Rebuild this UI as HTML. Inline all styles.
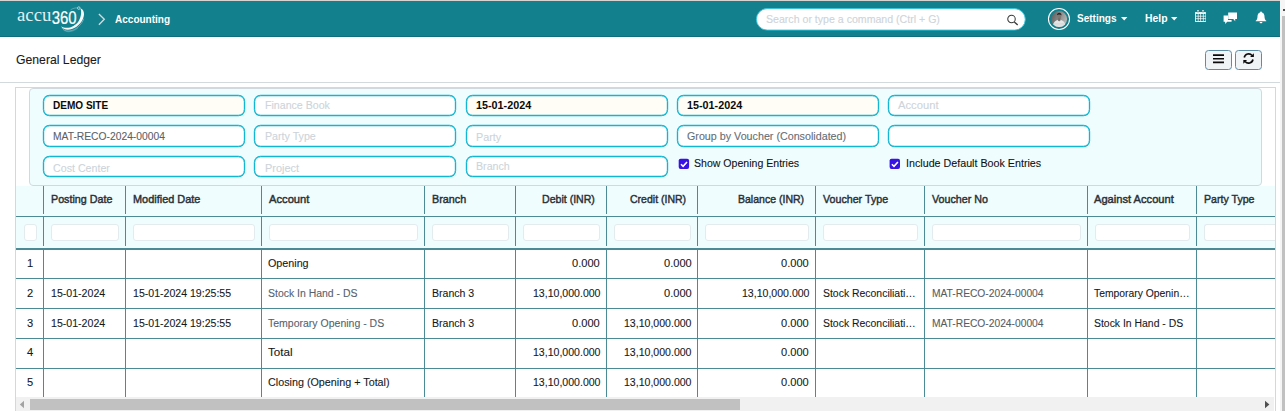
<!DOCTYPE html>
<html><head><meta charset="utf-8"><title>General Ledger</title>
<style>
html,body{margin:0;padding:0;}
body{width:1285px;height:411px;overflow:hidden;background:#fff;position:relative;font-family:"Liberation Sans",sans-serif;}
.a{position:absolute;box-sizing:border-box;}
.t{position:absolute;white-space:pre;font-family:"Liberation Sans",sans-serif;display:inline-block;line-height:14px;transform-origin:0 0;}
.inp{position:absolute;box-sizing:border-box;height:21px;width:202px;border:1px solid #12b6d0;border-radius:6.5px;background:#fff;box-shadow:0 0 0 0.18px #12b6d0, inset 0 0 0 0.18px #12b6d0;}
.inp.v{background:#fffdf5;}
.fi{position:absolute;box-sizing:border-box;top:224px;height:17px;border:1px solid #e4ebee;border-radius:3px;background:#fff;}
.vl{position:absolute;width:1px;background:#4c8b96;}
.hl{position:absolute;height:1px;background:#4c8b96;left:16px;width:1259px;}
.btn{position:absolute;box-sizing:border-box;top:50px;height:20px;width:27px;border:1px solid #5d8ca6;border-radius:3.5px;background:#f0f4f7;}
.cb{position:absolute;box-sizing:border-box;width:10.5px;height:10.5px;border-radius:2px;background:#3a12e6;}
svg{position:absolute;overflow:visible;}

</style></head>
<body>
<!-- top strip -->
<div class="a" style="left:0;top:0;width:1285px;height:1px;background:#d6d3d0"></div>
<!-- navbar -->
<div class="a" style="left:0;top:1px;width:1280px;height:36px;background:#13808e;border-bottom:1px solid #0f6e7b"></div>
<!-- vertical page scrollbar (cropped) -->
<div class="a" style="left:1280px;top:0;width:5px;height:411px;background:#f5f5f5"></div>
<div class="a" style="left:1282px;top:16px;width:3px;height:395px;background:#c1c1c1"></div>
<div class="a" style="left:1283px;top:9px;width:2px;height:2px;background:#505050"></div>

<!-- logo -->
<svg style="left:0;top:0" width="100" height="38" viewBox="0 0 100 38">
  <text x="17" y="21.3" font-family="Liberation Serif, serif" font-size="17.9" fill="#fff" fill-opacity="0.9" textLength="34.4" lengthAdjust="spacingAndGlyphs">accu</text>
  <g transform="translate(51.7 23.8) scale(0.795 1)"><text x="0" y="0" font-family="Liberation Sans, sans-serif" font-size="18.8" fill="#fff" stroke="#fff" stroke-width="0.22">360</text></g>
  <path d="M61 26.2 C63.5 30.4 70 31 76.5 26.7 C82.2 22.8 85.6 15.6 83.3 10.8 C82.7 9.6 81.7 8.8 80.4 8.6 C81.7 11.5 81.4 16.5 78.7 20.9 C75.4 26.2 67 30.2 61 26.2 Z" fill="#fff" fill-opacity="0.96"/>
  <path d="M61.8 27.9 C65 32 72 32.4 78.5 26.6 C81.5 23.8 83.2 20.8 83.7 18.6" fill="none" stroke="#fff" stroke-opacity="0.55" stroke-width="0.6"/>
  <path d="M63.4 30 C67 32.8 73 32.2 78.2 27.8" fill="none" stroke="#fff" stroke-opacity="0.35" stroke-width="0.55"/>
  <path d="M70.6 9.8 C72.8 8.4 75.4 7.7 77.4 7.9" fill="none" stroke="#fff" stroke-opacity="0.6" stroke-width="0.5"/>
  <circle cx="78.8" cy="8.1" r="1.3" fill="#13808e" stroke="#fff" stroke-opacity="0.95" stroke-width="0.65"/>
</svg>
<!-- breadcrumb chevron -->
<svg style="left:98px;top:13px" width="8" height="13" viewBox="0 0 8 13"><path d="M0.9 0.9 L6.3 6.3 L0.9 11.7" fill="none" stroke="#d3dbde" stroke-width="1.35"/></svg>

<!-- search -->
<svg style="left:750px;top:4px" width="285" height="30" viewBox="750 4 285 30"><rect x="756.4" y="8.6" width="268.9" height="21.5" rx="10.75" fill="#fff" stroke="#2cc0d6" stroke-width="0.9"/></svg>
<svg style="left:1005px;top:13px" width="15" height="14" viewBox="0 0 15 14"><circle cx="6.5" cy="6" r="3.75" fill="none" stroke="#3a3a3a" stroke-width="1.05"/><path d="M9.3 8.9 L12.7 11.9" stroke="#3a3a3a" stroke-width="1.3" fill="none"/></svg>

<!-- avatar -->
<svg style="left:1047px;top:7px" width="24" height="24" viewBox="0 0 24 24">
  <defs>
    <linearGradient id="ag" x1="0" y1="0.2" x2="1" y2="0.6"><stop offset="0" stop-color="#5e5e5e"/><stop offset="0.55" stop-color="#8e8e8e"/><stop offset="1" stop-color="#b8b8b8"/></linearGradient>
    <clipPath id="ac"><circle cx="12.1" cy="12.1" r="8"/></clipPath>
  </defs>
  <circle cx="12" cy="12" r="10.55" fill="none" stroke="#fff" stroke-width="1.05"/>
  <circle cx="12.1" cy="12.1" r="8" fill="url(#ag)"/>
  <g clip-path="url(#ac)">
    <path d="M5.6 20.5 C5.8 15.6 8.4 13.6 10.6 13 L12.2 14.6 L13.8 13 C16.4 13.6 18.6 15.8 18.8 20.5Z" fill="#e6e6e6"/>
    <path d="M7 16.4 H17.4 M6.6 17.8 H17.8" stroke="#cfcfcf" stroke-width="0.5" fill="none"/>
    <ellipse cx="12.2" cy="9.4" rx="1.9" ry="2.7" fill="#7d7772"/>
    <rect x="11.2" y="11.4" width="2" height="2.4" fill="#6f6a66"/>
    <path d="M10 8.3 C9.6 4.9 15 4.7 14.5 8.5 C13.4 7.2 11.2 7 10 8.3Z" fill="#262626"/>
  </g>
</svg>
<!-- carets -->
<svg style="left:1121px;top:17px" width="7" height="4" viewBox="0 0 7 4"><path d="M0 0 H6.4 L3.2 3.4Z" fill="#fff"/></svg>
<svg style="left:1171px;top:17px" width="7" height="4" viewBox="0 0 7 4"><path d="M0 0 H6.4 L3.2 3.4Z" fill="#fff"/></svg>

<!-- calendar icon -->
<svg style="left:1195px;top:10px" width="11" height="12" viewBox="0 0 11 12">
  <path d="M0.1 2.1 H10.9 V11.9 H0.1Z" fill="#fff"/>
  <path d="M2.1 0.2 h1.8 v2.4 h-1.8z M7.1 0.2 h1.8 v2.4 h-1.8z" fill="#fff"/>
  <g fill="#13808e">
<rect x="0.95" y="3.9" width="1.85" height="1.9"/><rect x="3.5" y="3.9" width="1.85" height="1.9"/><rect x="6.05" y="3.9" width="1.85" height="1.9"/><rect x="8.6" y="3.9" width="1.85" height="1.9"/><rect x="0.95" y="6.5" width="1.85" height="1.9"/><rect x="3.5" y="6.5" width="1.85" height="1.9"/><rect x="6.05" y="6.5" width="1.85" height="1.9"/><rect x="8.6" y="6.5" width="1.85" height="1.9"/><rect x="0.95" y="9.1" width="1.85" height="1.9"/><rect x="3.5" y="9.1" width="1.85" height="1.9"/><rect x="6.05" y="9.1" width="1.85" height="1.9"/><rect x="8.6" y="9.1" width="1.85" height="1.9"/>
    <rect x="2.6" y="0.8" width="0.8" height="1.9" rx="0.4"/><rect x="7.6" y="0.8" width="0.8" height="1.9" rx="0.4"/>
  </g>
</svg>
<!-- chat icon -->
<svg style="left:1223px;top:11.5px" width="15" height="13" viewBox="0 0 15 13">
  <path d="M0.6 3.6 H5 V8 H8.6 V9.8 H4.2 L2.2 12 V9.8 H0.6Z" fill="#fff"/>
  <path d="M5.2 0.4 H14 V7 H12.2 V9.2 L10.2 7 H5.2Z" fill="#fff"/>
</svg>
<!-- bell icon -->
<svg style="left:1255px;top:11px" width="12" height="13" viewBox="0 0 12 13">
  <path d="M6 0.5 C6.6 0.5 6.9 0.9 6.9 1.4 C8.8 1.9 9.5 3.6 9.5 5.4 C9.5 7.8 10.2 8.9 11.3 9.8 V10.3 H0.7 V9.8 C1.8 8.9 2.5 7.8 2.5 5.4 C2.5 3.6 3.2 1.9 5.1 1.4 C5.1 0.9 5.4 0.5 6 0.5Z" fill="#fff"/>
  <path d="M4.6 10.9 H7.4 C7.4 11.7 6.8 12.2 6 12.2 C5.2 12.2 4.6 11.7 4.6 10.9Z" fill="#fff"/>
</svg>

<!-- page head buttons -->
<div class="btn" style="left:1205px"></div>
<div class="btn" style="left:1235px"></div>
<svg style="left:1212px;top:53px" width="14" height="12" viewBox="0 0 14 12"><path d="M1 1.35 H12 V3 H1Z M1 4.9 H12 V6.6 H1Z M1 8.45 H12 V10.15 H1Z" fill="#0a0a0a"/></svg>
<svg style="left:1242px;top:52px" width="14" height="13" viewBox="0 0 14 13">
  <path d="M2.25 5.5 A4.45 4.45 0 0 1 10.1 3.5" fill="none" stroke="#0a0a0a" stroke-width="1.65"/>
  <path d="M11.9 1.2 V5 H8.1Z" fill="#0a0a0a"/>
  <path d="M10.95 7.5 A4.45 4.45 0 0 1 3.1 9.5" fill="none" stroke="#0a0a0a" stroke-width="1.65"/>
  <path d="M1.3 11.8 V8 H5.1Z" fill="#0a0a0a"/>
</svg>

<!-- page head divider -->
<div class="a" style="left:0;top:82px;width:1280px;height:1px;background:#d3dade"></div>
<!-- outer container -->
<div class="a" style="left:15px;top:87px;width:1261px;height:330px;border:1px solid #d1d9de;background:#fff"></div>
<!-- table header bg -->
<div class="a" style="left:16px;top:186px;width:1259px;height:62px;background:#effdff"></div>
<!-- filter box -->
<div class="a" style="left:29px;top:88px;width:1233px;height:98px;border:1px solid #d1d9de;border-radius:4px;background:#effdff"></div>

<!-- filter inputs -->
<div class="inp v" style="left:43px;top:95px"></div>
<div class="inp" style="left:254px;top:95px"></div>
<div class="inp v" style="left:466px;top:95px"></div>
<div class="inp v" style="left:677px;top:95px"></div>
<div class="inp" style="left:888px;top:95px"></div>
<div class="inp" style="left:43px;top:125px;height:22px"></div>
<div class="inp" style="left:254px;top:125px;height:22px"></div>
<div class="inp" style="left:466px;top:125px;height:22px"></div>
<div class="inp" style="left:677px;top:125px;height:22px"></div>
<div class="inp" style="left:888px;top:125px;height:22px"></div>
<div class="inp" style="left:43px;top:156px"></div>
<div class="inp" style="left:254px;top:156px"></div>
<div class="inp" style="left:466px;top:156px"></div>
<!-- checkboxes -->
<svg style="left:670px;top:150px" width="40" height="30" viewBox="670 150 40 30"><rect x="678.7" y="158.7" width="10.4" height="10.3" rx="1.9" fill="#3913e3"/><path d="M681 164.2 L683.1 166.3 L687 162" fill="none" stroke="#fff" stroke-width="1.55"/></svg>
<svg style="left:880px;top:150px" width="40" height="30" viewBox="880 150 40 30"><rect x="889.6" y="158.7" width="10.4" height="10.3" rx="1.9" fill="#3913e3"/><path d="M891.9 164.2 L894 166.3 L897.9 162" fill="none" stroke="#fff" stroke-width="1.55"/></svg>

<!-- table grid: vertical lines -->
<div class="vl" style="left:43px;top:186px;height:28px"></div>
<div class="vl" style="left:43px;top:217px;height:29px"></div>
<div class="vl" style="left:43px;top:250px;height:147px"></div>
<div class="vl" style="left:125px;top:186px;height:28px"></div>
<div class="vl" style="left:125px;top:217px;height:29px"></div>
<div class="vl" style="left:125px;top:250px;height:147px"></div>
<div class="vl" style="left:261px;top:186px;height:28px"></div>
<div class="vl" style="left:261px;top:217px;height:29px"></div>
<div class="vl" style="left:261px;top:250px;height:147px"></div>
<div class="vl" style="left:424px;top:186px;height:28px"></div>
<div class="vl" style="left:424px;top:217px;height:29px"></div>
<div class="vl" style="left:424px;top:250px;height:147px"></div>
<div class="vl" style="left:515px;top:186px;height:28px"></div>
<div class="vl" style="left:515px;top:217px;height:29px"></div>
<div class="vl" style="left:515px;top:250px;height:147px"></div>
<div class="vl" style="left:606px;top:186px;height:28px"></div>
<div class="vl" style="left:606px;top:217px;height:29px"></div>
<div class="vl" style="left:606px;top:250px;height:147px"></div>
<div class="vl" style="left:697px;top:186px;height:28px"></div>
<div class="vl" style="left:697px;top:217px;height:29px"></div>
<div class="vl" style="left:697px;top:250px;height:147px"></div>
<div class="vl" style="left:815px;top:186px;height:28px"></div>
<div class="vl" style="left:815px;top:217px;height:29px"></div>
<div class="vl" style="left:815px;top:250px;height:147px"></div>
<div class="vl" style="left:924px;top:186px;height:28px"></div>
<div class="vl" style="left:924px;top:217px;height:29px"></div>
<div class="vl" style="left:924px;top:250px;height:147px"></div>
<div class="vl" style="left:1087px;top:186px;height:28px"></div>
<div class="vl" style="left:1087px;top:217px;height:29px"></div>
<div class="vl" style="left:1087px;top:250px;height:147px"></div>
<div class="vl" style="left:1196px;top:186px;height:28px"></div>
<div class="vl" style="left:1196px;top:217px;height:29px"></div>
<div class="vl" style="left:1196px;top:250px;height:147px"></div>
<!-- horizontal lines -->
<div class="hl" style="top:216px"></div>
<div class="hl" style="top:248px;height:2px"></div>
<div class="hl" style="top:278px"></div>
<div class="hl" style="top:308px"></div>
<div class="hl" style="top:338px"></div>
<div class="hl" style="top:368px"></div>
<!-- column filter inputs -->
<div class="fi" style="left:23.5px;width:13px"></div>
<div class="fi" style="left:51px;width:68px"></div>
<div class="fi" style="left:133px;width:122px"></div>
<div class="fi" style="left:269px;width:149px"></div>
<div class="fi" style="left:432px;width:77px"></div>
<div class="fi" style="left:523px;width:77px"></div>
<div class="fi" style="left:614px;width:77px"></div>
<div class="fi" style="left:705px;width:104px"></div>
<div class="fi" style="left:823px;width:95px"></div>
<div class="fi" style="left:932px;width:149px"></div>
<div class="fi" style="left:1095px;width:95px"></div>
<div class="fi" style="left:1204px;width:71px;border-right:none;border-radius:3px 0 0 3px"></div>
<!-- horizontal scrollbar -->
<div class="a" style="left:16px;top:397px;width:1258px;height:14px;background:#f1f1f1"></div>
<div class="a" style="left:30px;top:399px;width:710px;height:11px;background:#c1c1c1"></div>
<svg style="left:19px;top:400px" width="6" height="9" viewBox="0 0 6 9"><path d="M5 0.8 V8.2 L0.8 4.5Z" fill="#a3a3a3"/></svg>
<svg style="left:1264px;top:400px" width="6" height="9" viewBox="0 0 6 9"><path d="M1 0.8 V8.2 L5.4 4.5Z" fill="#505050"/></svg>

<span class="t" style="left:114.70px;top:11.55px;font-size:11.7px;font-weight:700;color:#fff;transform:scaleX(0.8572)">Accounting</span>
<span class="t" style="left:765.80px;top:11.95px;font-size:11.7px;font-weight:400;color:#ced4d9;-webkit-text-stroke:0.1px #ced4d9;transform:scaleX(0.9060)">Search or type a command (Ctrl + G)</span>
<span class="t" style="left:1076.80px;top:11.25px;font-size:11.7px;font-weight:700;color:#fff;transform:scaleX(0.8567)">Settings</span>
<span class="t" style="left:1144.70px;top:11.25px;font-size:11.7px;font-weight:700;color:#fff;transform:scaleX(0.8883)">Help</span>
<span class="t" style="left:16.10px;top:52.60px;font-size:12.7px;font-weight:400;color:#1a1a1a;-webkit-text-stroke:0.1px #1a1a1a;transform:scaleX(0.9629)">General Ledger</span>
<span class="t" style="left:53.10px;top:98.15px;font-size:11.7px;font-weight:700;color:#0b0b0b;transform:scaleX(0.8585)">DEMO SITE</span>
<span class="t" style="left:264.60px;top:98.15px;font-size:11.7px;font-weight:400;color:#cdd4da;-webkit-text-stroke:0.1px #cdd4da;transform:scaleX(0.9081)">Finance Book</span>
<span class="t" style="left:475.80px;top:98.15px;font-size:11.7px;font-weight:700;color:#0b0b0b;transform:scaleX(0.9231)">15-01-2024</span>
<span class="t" style="left:686.50px;top:98.15px;font-size:11.7px;font-weight:700;color:#0b0b0b;transform:scaleX(0.9231)">15-01-2024</span>
<span class="t" style="left:897.80px;top:98.15px;font-size:11.7px;font-weight:400;color:#cdd4da;-webkit-text-stroke:0.1px #cdd4da;transform:scaleX(0.9589)">Account</span>
<span class="t" style="left:53.10px;top:129.25px;font-size:11.7px;font-weight:400;color:#5a6167;-webkit-text-stroke:0.1px #5a6167;transform:scaleX(0.8803)">MAT-RECO-2024-00004</span>
<span class="t" style="left:264.60px;top:129.25px;font-size:11.7px;font-weight:400;color:#cdd4da;-webkit-text-stroke:0.1px #cdd4da;transform:scaleX(0.9127)">Party Type</span>
<span class="t" style="left:475.80px;top:130.45px;font-size:11.7px;font-weight:400;color:#cdd4da;-webkit-text-stroke:0.1px #cdd4da;transform:scaleX(0.9237)">Party</span>
<span class="t" style="left:686.50px;top:129.25px;font-size:11.7px;font-weight:400;color:#666d73;-webkit-text-stroke:0.1px #666d73;transform:scaleX(0.9172)">Group by Voucher (Consolidated)</span>
<span class="t" style="left:53.10px;top:160.95px;font-size:11.7px;font-weight:400;color:#cdd4da;-webkit-text-stroke:0.1px #cdd4da;transform:scaleX(0.9125)">Cost Center</span>
<span class="t" style="left:264.60px;top:160.95px;font-size:11.7px;font-weight:400;color:#cdd4da;-webkit-text-stroke:0.1px #cdd4da;transform:scaleX(0.9343)">Project</span>
<span class="t" style="left:475.80px;top:158.65px;font-size:11.7px;font-weight:400;color:#cdd4da;-webkit-text-stroke:0.1px #cdd4da;transform:scaleX(0.9124)">Branch</span>
<span class="t" style="left:694.30px;top:156.05px;font-size:11.7px;font-weight:400;color:#111;-webkit-text-stroke:0.1px #111;transform:scaleX(0.9037)">Show Opening Entries</span>
<span class="t" style="left:905.80px;top:156.05px;font-size:11.7px;font-weight:400;color:#111;-webkit-text-stroke:0.1px #111;transform:scaleX(0.9167)">Include Default Book Entries</span>
<span class="t" style="left:51.00px;top:192.05px;font-size:11.7px;font-weight:400;color:#2a3035;-webkit-text-stroke:0.45px #2a3035;transform:scaleX(0.9175)">Posting Date</span>
<span class="t" style="left:132.80px;top:192.05px;font-size:11.7px;font-weight:400;color:#2a3035;-webkit-text-stroke:0.45px #2a3035;transform:scaleX(0.9345)">Modified Date</span>
<span class="t" style="left:268.70px;top:192.05px;font-size:11.7px;font-weight:400;color:#2a3035;-webkit-text-stroke:0.45px #2a3035;transform:scaleX(0.9566)">Account</span>
<span class="t" style="left:431.80px;top:192.05px;font-size:11.7px;font-weight:400;color:#2a3035;-webkit-text-stroke:0.45px #2a3035;transform:scaleX(0.9232)">Branch</span>
<span class="t" style="left:542.20px;top:192.05px;font-size:11.7px;font-weight:400;color:#2a3035;-webkit-text-stroke:0.45px #2a3035;transform:scaleX(0.9050)">Debit (INR)</span>
<span class="t" style="left:629.90px;top:192.05px;font-size:11.7px;font-weight:400;color:#2a3035;-webkit-text-stroke:0.45px #2a3035;transform:scaleX(0.8998)">Credit (INR)</span>
<span class="t" style="left:737.90px;top:192.05px;font-size:11.7px;font-weight:400;color:#2a3035;-webkit-text-stroke:0.45px #2a3035;transform:scaleX(0.9005)">Balance (INR)</span>
<span class="t" style="left:822.70px;top:192.05px;font-size:11.7px;font-weight:400;color:#2a3035;-webkit-text-stroke:0.45px #2a3035;transform:scaleX(0.9135)">Voucher Type</span>
<span class="t" style="left:932.00px;top:192.05px;font-size:11.7px;font-weight:400;color:#2a3035;-webkit-text-stroke:0.45px #2a3035;transform:scaleX(0.9169)">Voucher No</span>
<span class="t" style="left:1094.40px;top:192.05px;font-size:11.7px;font-weight:400;color:#2a3035;-webkit-text-stroke:0.45px #2a3035;transform:scaleX(0.9519)">Against Account</span>
<span class="t" style="left:1203.90px;top:192.05px;font-size:11.7px;font-weight:400;color:#2a3035;-webkit-text-stroke:0.45px #2a3035;transform:scaleX(0.9074)">Party Type</span>
<span class="t" style="left:26.70px;top:255.85px;font-size:11.7px;font-weight:400;color:#16191c;-webkit-text-stroke:0.1px #16191c;transform:scaleX(0.9516)">1</span>
<span class="t" style="left:26.70px;top:285.75px;font-size:11.7px;font-weight:400;color:#16191c;-webkit-text-stroke:0.1px #16191c;transform:scaleX(0.9516)">2</span>
<span class="t" style="left:26.70px;top:315.85px;font-size:11.7px;font-weight:400;color:#16191c;-webkit-text-stroke:0.1px #16191c;transform:scaleX(0.9516)">3</span>
<span class="t" style="left:26.70px;top:344.85px;font-size:11.7px;font-weight:400;color:#16191c;-webkit-text-stroke:0.1px #16191c;transform:scaleX(0.9516)">4</span>
<span class="t" style="left:26.70px;top:374.85px;font-size:11.7px;font-weight:400;color:#16191c;-webkit-text-stroke:0.1px #16191c;transform:scaleX(0.9516)">5</span>
<span class="t" style="left:51.20px;top:285.75px;font-size:11.7px;font-weight:400;color:#16191c;-webkit-text-stroke:0.1px #16191c;transform:scaleX(0.9064)">15-01-2024</span>
<span class="t" style="left:133.30px;top:285.75px;font-size:11.7px;font-weight:400;color:#16191c;-webkit-text-stroke:0.1px #16191c;transform:scaleX(0.9039)">15-01-2024 19:25:55</span>
<span class="t" style="left:431.80px;top:285.75px;font-size:11.7px;font-weight:400;color:#16191c;-webkit-text-stroke:0.1px #16191c;transform:scaleX(0.9021)">Branch 3</span>
<span class="t" style="left:822.70px;top:285.75px;font-size:11.7px;font-weight:400;color:#16191c;-webkit-text-stroke:0.1px #16191c;transform:scaleX(0.8928)">Stock Reconciliati…</span>
<span class="t" style="left:932.00px;top:285.75px;font-size:11.7px;font-weight:400;color:#555d64;-webkit-text-stroke:0.1px #555d64;transform:scaleX(0.8772)">MAT-RECO-2024-00004</span>
<span class="t" style="left:51.20px;top:315.85px;font-size:11.7px;font-weight:400;color:#16191c;-webkit-text-stroke:0.1px #16191c;transform:scaleX(0.9064)">15-01-2024</span>
<span class="t" style="left:133.30px;top:315.85px;font-size:11.7px;font-weight:400;color:#16191c;-webkit-text-stroke:0.1px #16191c;transform:scaleX(0.9039)">15-01-2024 19:25:55</span>
<span class="t" style="left:431.80px;top:315.85px;font-size:11.7px;font-weight:400;color:#16191c;-webkit-text-stroke:0.1px #16191c;transform:scaleX(0.9021)">Branch 3</span>
<span class="t" style="left:822.70px;top:315.85px;font-size:11.7px;font-weight:400;color:#16191c;-webkit-text-stroke:0.1px #16191c;transform:scaleX(0.8928)">Stock Reconciliati…</span>
<span class="t" style="left:932.00px;top:315.85px;font-size:11.7px;font-weight:400;color:#555d64;-webkit-text-stroke:0.1px #555d64;transform:scaleX(0.8772)">MAT-RECO-2024-00004</span>
<span class="t" style="left:268.40px;top:255.85px;font-size:11.7px;font-weight:400;color:#16191c;-webkit-text-stroke:0.1px #16191c;transform:scaleX(0.9185)">Opening</span>
<span class="t" style="left:268.40px;top:285.75px;font-size:11.7px;font-weight:400;color:#55626d;-webkit-text-stroke:0.1px #55626d;transform:scaleX(0.8946)">Stock In Hand - DS</span>
<span class="t" style="left:268.40px;top:315.85px;font-size:11.7px;font-weight:400;color:#55626d;-webkit-text-stroke:0.1px #55626d;transform:scaleX(0.8989)">Temporary Opening - DS</span>
<span class="t" style="left:268.40px;top:344.85px;font-size:11.7px;font-weight:400;color:#16191c;-webkit-text-stroke:0.1px #16191c;transform:scaleX(0.9965)">Total</span>
<span class="t" style="left:268.40px;top:374.85px;font-size:11.7px;font-weight:400;color:#16191c;-webkit-text-stroke:0.1px #16191c;transform:scaleX(0.9212)">Closing (Opening + Total)</span>
<span class="t" style="left:1094.40px;top:285.75px;font-size:11.7px;font-weight:400;color:#16191c;-webkit-text-stroke:0.1px #16191c;transform:scaleX(0.8855)">Temporary Openin…</span>
<span class="t" style="left:1094.40px;top:315.85px;font-size:11.7px;font-weight:400;color:#16191c;-webkit-text-stroke:0.1px #16191c;transform:scaleX(0.8916)">Stock In Hand - DS</span>
<span class="t" style="left:572.40px;top:255.85px;font-size:11.7px;font-weight:400;color:#16191c;-webkit-text-stroke:0.1px #16191c;transform:scaleX(0.9470)">0.000</span>
<span class="t" style="left:663.50px;top:255.85px;font-size:11.7px;font-weight:400;color:#16191c;-webkit-text-stroke:0.1px #16191c;transform:scaleX(0.9470)">0.000</span>
<span class="t" style="left:781.40px;top:255.85px;font-size:11.7px;font-weight:400;color:#16191c;-webkit-text-stroke:0.1px #16191c;transform:scaleX(0.9470)">0.000</span>
<span class="t" style="left:532.60px;top:285.75px;font-size:11.7px;font-weight:400;color:#16191c;-webkit-text-stroke:0.1px #16191c;transform:scaleX(0.9030)">13,10,000.000</span>
<span class="t" style="left:663.50px;top:285.75px;font-size:11.7px;font-weight:400;color:#16191c;-webkit-text-stroke:0.1px #16191c;transform:scaleX(0.9470)">0.000</span>
<span class="t" style="left:741.60px;top:285.75px;font-size:11.7px;font-weight:400;color:#16191c;-webkit-text-stroke:0.1px #16191c;transform:scaleX(0.9030)">13,10,000.000</span>
<span class="t" style="left:572.40px;top:315.85px;font-size:11.7px;font-weight:400;color:#16191c;-webkit-text-stroke:0.1px #16191c;transform:scaleX(0.9470)">0.000</span>
<span class="t" style="left:623.70px;top:315.85px;font-size:11.7px;font-weight:400;color:#16191c;-webkit-text-stroke:0.1px #16191c;transform:scaleX(0.9030)">13,10,000.000</span>
<span class="t" style="left:781.40px;top:315.85px;font-size:11.7px;font-weight:400;color:#16191c;-webkit-text-stroke:0.1px #16191c;transform:scaleX(0.9470)">0.000</span>
<span class="t" style="left:532.60px;top:344.85px;font-size:11.7px;font-weight:400;color:#16191c;-webkit-text-stroke:0.1px #16191c;transform:scaleX(0.9030)">13,10,000.000</span>
<span class="t" style="left:623.70px;top:344.85px;font-size:11.7px;font-weight:400;color:#16191c;-webkit-text-stroke:0.1px #16191c;transform:scaleX(0.9030)">13,10,000.000</span>
<span class="t" style="left:781.40px;top:344.85px;font-size:11.7px;font-weight:400;color:#16191c;-webkit-text-stroke:0.1px #16191c;transform:scaleX(0.9470)">0.000</span>
<span class="t" style="left:532.60px;top:374.85px;font-size:11.7px;font-weight:400;color:#16191c;-webkit-text-stroke:0.1px #16191c;transform:scaleX(0.9030)">13,10,000.000</span>
<span class="t" style="left:623.70px;top:374.85px;font-size:11.7px;font-weight:400;color:#16191c;-webkit-text-stroke:0.1px #16191c;transform:scaleX(0.9030)">13,10,000.000</span>
<span class="t" style="left:781.40px;top:374.85px;font-size:11.7px;font-weight:400;color:#16191c;-webkit-text-stroke:0.1px #16191c;transform:scaleX(0.9470)">0.000</span>
</body></html>
